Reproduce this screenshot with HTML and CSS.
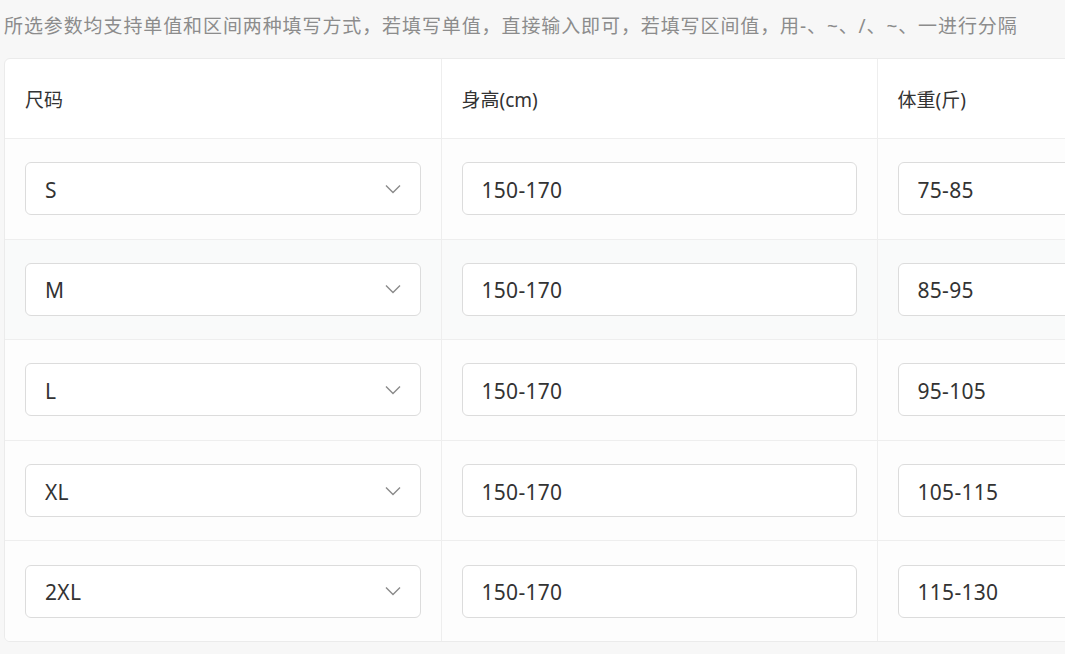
FILE: index.html
```html
<!DOCTYPE html>
<html lang="zh-CN">
<head>
    <meta charset="UTF-8">
    <meta name="viewport" content="width=device-width, initial-scale=1.0">
    <title>尺码参数</title>
    <link rel="stylesheet" href="styles.css">
</head>
<body>
    <p class="tip">所选参数均支持单值和区间两种填写方式，若填写单值，直接输入即可，若填写区间值，用-、~、/、~、一进行分隔</p>

    <div class="card">
        <table class="size-table">
            <tr>
                <th>尺码</th>
                <th>身高(cm)</th>
                <th>体重(斤)</th>
            </tr>
            <tr>
                <td><div class="select"><span>S</span><svg class="arrow" viewBox="0 0 16 10"><path d="M1 1.5 L8 8.5 L15 1.5"/></svg></div></td>
                <td><input class="field" type="text" value="150-170"></td>
                <td><input class="field" type="text" value="75-85"></td>
            </tr>
            <tr class="hover">
                <td><div class="select"><span>M</span><svg class="arrow" viewBox="0 0 16 10"><path d="M1 1.5 L8 8.5 L15 1.5"/></svg></div></td>
                <td><input class="field" type="text" value="150-170"></td>
                <td><input class="field" type="text" value="85-95"></td>
            </tr>
            <tr>
                <td><div class="select"><span>L</span><svg class="arrow" viewBox="0 0 16 10"><path d="M1 1.5 L8 8.5 L15 1.5"/></svg></div></td>
                <td><input class="field" type="text" value="150-170"></td>
                <td><input class="field" type="text" value="95-105"></td>
            </tr>
            <tr>
                <td><div class="select"><span>XL</span><svg class="arrow" viewBox="0 0 16 10"><path d="M1 1.5 L8 8.5 L15 1.5"/></svg></div></td>
                <td><input class="field" type="text" value="150-170"></td>
                <td><input class="field" type="text" value="105-115"></td>
            </tr>
            <tr>
                <td><div class="select"><span>2XL</span><svg class="arrow" viewBox="0 0 16 10"><path d="M1 1.5 L8 8.5 L15 1.5"/></svg></div></td>
                <td><input class="field" type="text" value="150-170"></td>
                <td><input class="field" type="text" value="115-130"></td>
            </tr>
        </table>
    </div>
</body>
</html>
```

FILE: styles.css
```css
html {
    overflow: hidden;
}

body {
    margin: 0;
    padding: 0 0 0 4px;
    font-family: "Noto Sans", "Noto Sans CJK SC", sans-serif;
    background-color: #f7f7f7;
    color: #333;
}

.tip {
    margin: 0;
    height: 58px;
    line-height: 52px;
    font-size: 19px;
    color: #8c8c8c;
    white-space: nowrap;
    letter-spacing: 0.9px;
}

.card {
    width: 1308px;
    background: #fff;
    border: 1px solid #ebebeb;
    border-radius: 6px;
    overflow: hidden;
}

.size-table {
    border-collapse: collapse;
    width: 100%;
    table-layout: fixed;
}

th, td {
    border-left: 1px solid #eeeeee;
    border-top: 1px solid #eeeeee;
    text-align: left;
    padding: 0 20px;
}

th:first-child, td:first-child {
    border-left: none;
}

th {
    height: 79px;
    border-top: none;
    font-size: 19px;
    font-weight: normal;
    color: #333;
}

td {
    height: 99.6px;
    background: #fdfdfd;
}

tr.hover td {
    background: #f9fafa;
}

.select, .field {
    box-sizing: border-box;
    width: 100%;
    height: 53px;
    border: 1px solid #dcdcdc;
    border-radius: 6px;
    background: #fff;
    font-family: inherit;
    font-size: 21px;
    letter-spacing: 0.3px;
    color: #333;
}

.select {
    display: flex;
    align-items: center;
    justify-content: space-between;
    padding: 2px 19px 0 19px;
}

.field {
    display: block;
    padding: 2px 19px 0 19px;
    outline: none;
}

.arrow {
    width: 16px;
    height: 10px;
    margin-top: -2px;
    fill: none;
    stroke: #8a8a8a;
    stroke-width: 1.4;
}
```
